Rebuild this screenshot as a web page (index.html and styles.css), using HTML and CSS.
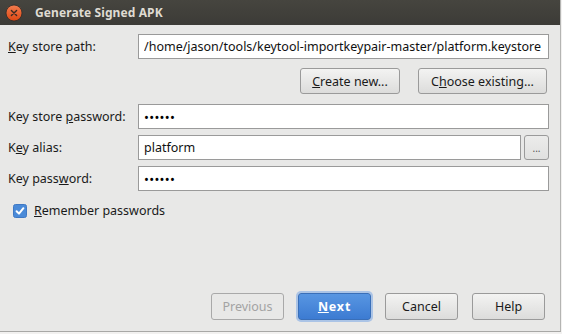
FILE: index.html
```html
<!DOCTYPE html>
<html lang="en">
<head>
    <meta charset="UTF-8">
    <title>Generate Signed APK</title>
    <link rel="stylesheet" href="styles.css">
</head>
<body>
    <div class="window">
        <header class="titlebar">
            <span class="close-btn">
                <svg width="18" height="18" viewBox="0 0 18 18">
                    <defs>
                        <linearGradient id="closeFill" x1="0" y1="0" x2="0" y2="1">
                            <stop offset="0" stop-color="#f47d4f"/>
                            <stop offset="1" stop-color="#dc4713"/>
                        </linearGradient>
                    </defs>
                    <circle cx="9" cy="9" r="8" fill="url(#closeFill)" stroke="#2c2b28" stroke-width="0.8"/>
                    <path d="M6.4 6.4 L11.6 11.6 M11.6 6.4 L6.4 11.6" stroke="#3a2a22" stroke-width="1.4" stroke-linecap="round"/>
                </svg>
            </span>
            <span class="title">Generate Signed APK</span>
        </header>

        <main class="content">
            <div class="row">
                <label class="field-label"><u>K</u>ey store path:</label>
                <input class="field" type="text" value="/home/jason/tools/keytool-importkeypair-master/platform.keystore">
            </div>
            <div class="row store-actions">
                <span></span>
                <div class="store-buttons">
                    <button class="btn create-btn"><u>C</u>reate new...</button>
                    <button class="btn choose-btn">C<u>h</u>oose existing...</button>
                </div>
            </div>
            <div class="row first-pass">
                <label class="field-label">Key store <u>p</u>assword:</label>
                <input class="field" type="password" value="secret">
            </div>
            <div class="row">
                <label class="field-label">K<u>e</u>y alias:</label>
                <div class="alias-wrap">
                    <input class="field" type="text" value="platform">
                    <button class="btn more-btn">...</button>
                </div>
            </div>
            <div class="row">
                <label class="field-label">Key pass<u>w</u>ord:</label>
                <input class="field" type="password" value="secret">
            </div>
            <label class="remember">
                <span class="checkbox">
                    <svg width="14" height="14" viewBox="0 0 14 14">
                        <rect x="0.5" y="0.5" width="13" height="13" rx="2" fill="#4a8ad8" stroke="#3f78c4"/>
                        <path d="M3.6 7.2 L6 9.6 L10.4 4.2" fill="none" stroke="#fff" stroke-width="2" stroke-linecap="round" stroke-linejoin="round"/>
                    </svg>
                </span>
                <span><u>R</u>emember passwords</span>
            </label>
        </main>

        <footer class="footer">
            <button class="btn nav-btn" disabled>Previous</button>
            <button class="btn nav-btn primary"><u>N</u>ext</button>
            <button class="btn nav-btn">Cancel</button>
            <button class="btn nav-btn">Help</button>
        </footer>
    </div>
</body>
</html>
```

FILE: styles.css
```css
:root {
    --bg-color: #e8e8e7;
    --text-color: #1a1a1a;
    --border-color: #9a9a9a;
    --title-bg: #3c3b37;
    --title-text: #dfdbd2;
    --accent: #4a88d8;
}

* {
    margin: 0;
    padding: 0;
    box-sizing: border-box;
}

body {
    background-color: #f2f1f0;
    font-family: 'Noto Sans', 'Open Sans', sans-serif;
    font-size: 12.5px;
    color: var(--text-color);
}

.window {
    width: 561px;
    height: 332px;
    background-color: var(--bg-color);
    border-right: 1px solid #b4b4b2;
    border-bottom: 1px solid #a8a8a6;
    display: flex;
    flex-direction: column;
}

.titlebar {
    height: 25px;
    background: linear-gradient(#46453f, var(--title-bg));
    display: flex;
    align-items: center;
    padding-left: 5px;
}

.close-btn {
    width: 18px;
    height: 18px;
    display: flex;
}

.title {
    margin-left: 12px;
    color: var(--title-text);
    font-weight: 700;
    font-size: 12px;
    letter-spacing: 0.1px;
}

.content {
    padding: 9px 11px 0 8px;
    display: flex;
    flex-direction: column;
}

.row {
    display: grid;
    grid-template-columns: 130px 1fr;
    align-items: center;
    margin-bottom: 6px;
}

.store-actions {
    margin-top: 3px;
}

.first-pass {
    margin-top: 4px;
}

.field-label {
    white-space: nowrap;
}

.field {
    height: 25px;
    width: 100%;
    border: 1px solid var(--border-color);
    background: #fff;
    font-family: inherit;
    font-size: 12.5px;
    color: #111;
    padding: 0 5px;
    outline: none;
}

input[type="password"] {
    font-size: 13px;
    letter-spacing: 0.3px;
    color: #000;
}

.store-buttons {
    display: flex;
    justify-content: flex-end;
    gap: 18px;
    padding-right: 2px;
}

.btn {
    height: 26px;
    border: 1px solid var(--border-color);
    border-radius: 3px;
    background: linear-gradient(#f3f3f2, #dcdcdb);
    font-family: inherit;
    font-size: 12.5px;
    color: var(--text-color);
    padding: 0 10px;
}

.create-btn {
    width: 100px;
}

.choose-btn {
    width: 129px;
}

.alias-wrap {
    display: flex;
    gap: 3px;
}

.more-btn {
    width: 25px;
    height: 25px;
    flex-shrink: 0;
    padding: 0;
    font-size: 10px;
    color: #555;
    background: linear-gradient(#ececeb, #e0e0df);
    line-height: 1;
}

.remember {
    display: flex;
    align-items: center;
    gap: 7px;
    margin-top: 5px;
    padding-left: 5px;
}

.checkbox {
    width: 14px;
    height: 14px;
    display: flex;
}

.footer {
    margin-top: auto;
    display: flex;
    justify-content: flex-end;
    gap: 14px;
    padding: 0 15px 11px 0;
}

.nav-btn {
    width: 73px;
    height: 27px;
    padding: 0;
}

.nav-btn:disabled {
    color: #a3a3a3;
    background: #e8e8e7;
    border-color: #a9a9a9;
}

.primary {
    background: linear-gradient(#5896e2, #3c7bd2);
    border-color: #3a6fb8;
    color: #fff;
    font-weight: 700;
    letter-spacing: 0.8px;
    box-shadow: 0 0 0 2px rgba(120, 165, 230, 0.55);
}
```
